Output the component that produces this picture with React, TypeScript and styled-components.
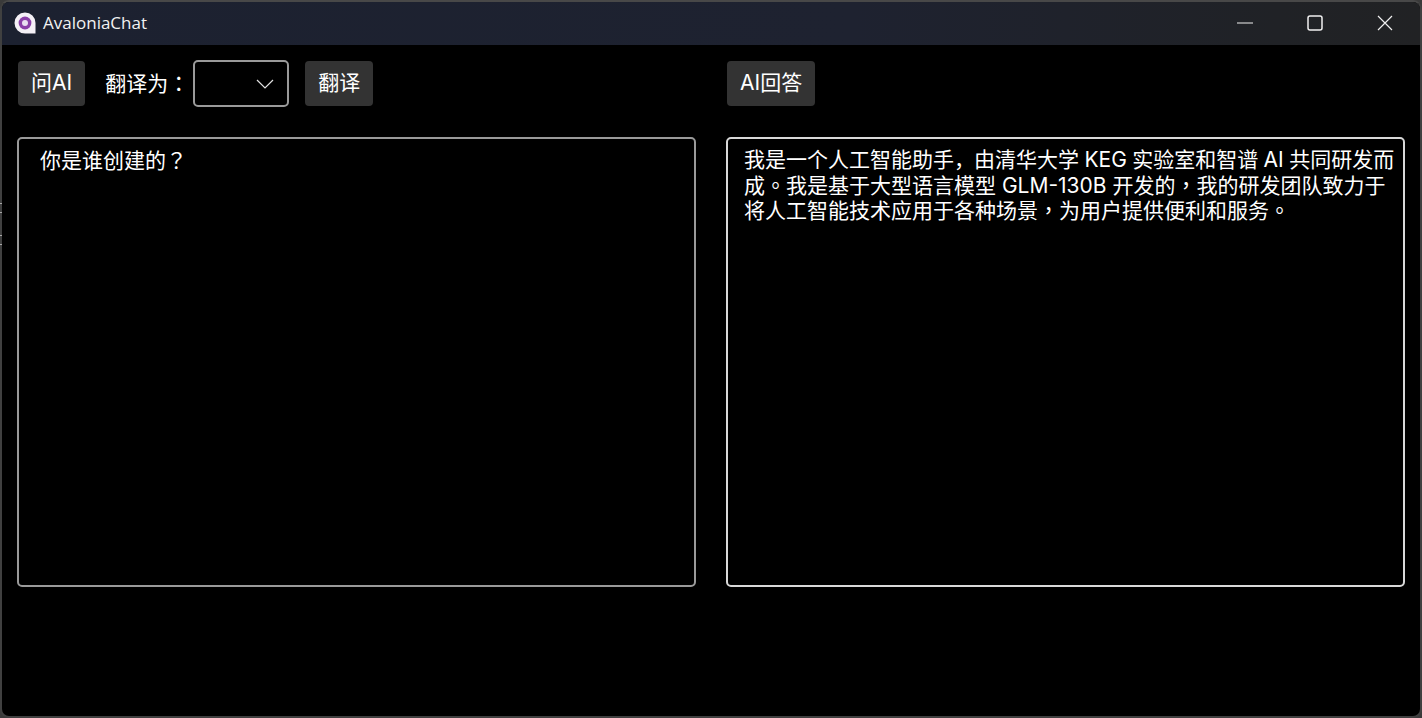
import React from "react";
import styled, { createGlobalStyle } from "styled-components";

const Global = createGlobalStyle`
  html, body { margin: 0; padding: 0; background: #000; }
  body { width: 1422px; height: 718px; overflow: hidden; font-family: "Inter", "Noto Sans CJK SC", sans-serif; }
`;

const Screen = styled.div`
  position: relative;
  width: 1422px;
  height: 718px;
  box-sizing: border-box;
  background: #3a3a3a;
`;

const Frame = styled.div`
  width: 100%;
  height: 100%;
  box-sizing: border-box;
  border: 2px solid #404040;
  border-top-color: #484848;
  border-radius: 9px;
  background: #000;
  display: flex;
  flex-direction: column;
  overflow: hidden;
`;

const EdgeTick = styled.i<{ $y: number }>`
  position: absolute;
  left: 0;
  top: ${(p) => p.$y}px;
  width: 2px;
  height: 1px;
  background: #a8a8a8;
`;

const TitleBar = styled.header`
  height: 43px;
  flex: none;
  box-sizing: border-box;
  display: flex;
  align-items: center;
  background: linear-gradient(90deg, #1c2130 0%, #1e2230 60%, #202226 90%, #212224 100%);
  padding: 0 0 2px 11px;
`;

const Logo = styled.svg`
  width: 24px;
  height: 24px;
  flex: none;
  filter: blur(0.35px);
`;

const Title = styled.span`
  margin-left: 6px;
  font-family: "Open Sans", sans-serif;
  font-size: 17px;
  color: #f2f2f2;
`;

const WindowButtons = styled.div`
  margin-left: auto;
  display: flex;
  height: 100%;
`;

const WindowButton = styled.div`
  width: 70px;
  height: 100%;
  display: flex;
  align-items: center;
  justify-content: center;
  svg { display: block; }
`;

const Content = styled.main`
  flex: 1;
  display: grid;
  grid-template-columns: 679px 679px;
  column-gap: 30px;
  padding: 15px 15px 0;
  align-content: start;
`;

const Column = styled.section`
  display: flex;
  flex-direction: column;
`;

const Toolbar = styled.div`
  height: 47px;
  display: flex;
  align-items: center;
  padding-left: 1px;
  margin-bottom: 30px;
`;

const Button = styled.button`
  height: 45px;
  box-sizing: border-box;
  border: 0;
  border-radius: 4px;
  background: #333333;
  color: #fff;
  font: 400 21px/1 "Inter", "Noto Sans CJK SC", sans-serif;
  padding: 0 13px 2px;
  white-space: nowrap;
`;

const Label = styled.span`
  margin: 0 4px 0 20px;
  padding-bottom: 2px;
  color: #fff;
  font-size: 21px;
  line-height: 25px;
  white-space: nowrap;
`;

const Punct = styled.span`
  font-family: "Noto Sans CJK TC", sans-serif;
`;

const Select = styled.div`
  width: 96px;
  height: 47px;
  box-sizing: border-box;
  border: 2px solid #9a9a9a;
  border-radius: 5px;
  display: flex;
  align-items: center;
  justify-content: flex-end;
  padding-right: 13px;
  margin-right: 16px;
`;

const TextArea = styled.div<{ $border: string; $inset: number }>`
  height: 450px;
  box-sizing: border-box;
  border: 2px solid ${(p) => p.$border};
  border-radius: 5px;
  padding: 8px 0 0 ${(p) => p.$inset}px;
  color: #fff;
  font-size: 21px;
  line-height: 25px;
  white-space: nowrap;
`;

const Line = styled.div<{ $tight?: boolean }>`
  height: 25px;
  word-spacing: ${(p) => (p.$tight ? "-0.5px" : "normal")};
`;

const NarrowComma = styled.span`
  letter-spacing: -1px;
`;

export default function App() {
  return (
    <>
      <Global />
      <Screen>
        <Frame>
          <TitleBar>
            <Logo viewBox="0 0 24 24">
              <path d="M12 1.5a10.5 10.5 0 1 0 0 21h10.5V12A10.5 10.5 0 0 0 12 1.5z" fill="#f4f0f6" />
              <circle cx="12" cy="12" r="6.4" fill="#8a3fa8" />
              <circle cx="12" cy="12" r="3" fill="#e9dff0" />
            </Logo>
            <Title>AvaloniaChat</Title>
            <WindowButtons>
              <WindowButton>
                <svg width="16" height="2" viewBox="0 0 16 2"><rect width="16" height="1" y="0.5" fill="#f0f0f0" /></svg>
              </WindowButton>
              <WindowButton>
                <svg width="16" height="16" viewBox="0 0 16 16"><rect x="1" y="1" width="14" height="14" rx="2" fill="none" stroke="#f0f0f0" strokeWidth="1.5" /></svg>
              </WindowButton>
              <WindowButton>
                <svg width="16" height="16" viewBox="0 0 16 16"><path d="M1 1l14 14M15 1L1 15" stroke="#f0f0f0" strokeWidth="1.2" fill="none" /></svg>
              </WindowButton>
            </WindowButtons>
          </TitleBar>
          <Content>
            <Column>
              <Toolbar>
                <Button>问AI</Button>
                <Label>翻译为<Punct>：</Punct></Label>
                <Select>
                  <svg width="18" height="10" viewBox="0 0 18 10"><path d="M1 1l8 8 8-8" fill="none" stroke="#e0e0e0" strokeWidth="1.2" /></svg>
                </Select>
                <Button>翻译</Button>
              </Toolbar>
              <TextArea $border="#9a9a9a" $inset={21}>
                <Line>你是谁创建的<Punct>？</Punct></Line>
              </TextArea>
            </Column>
            <Column>
              <Toolbar>
                <Button>AI回答</Button>
              </Toolbar>
              <TextArea $border="#d8d8d8" $inset={16}>
                <Line $tight>我是一个人工智能助手<NarrowComma>，</NarrowComma>由清华大学 KEG 实验室和智谱 AI 共同研发而</Line>
                <Line>成<Punct>。</Punct>我是基于大型语言模型 GLM-130B 开发的<Punct>，</Punct>我的研发团队致力于</Line>
                <Line>将人工智能技术应用于各种场景<Punct>，</Punct>为用户提供便利和服务<Punct>。</Punct></Line>
              </TextArea>
            </Column>
          </Content>
        </Frame>
        {[203, 212, 235, 244].map((y) => (
          <EdgeTick key={y} $y={y} />
        ))}
      </Screen>
    </>
  );
}
